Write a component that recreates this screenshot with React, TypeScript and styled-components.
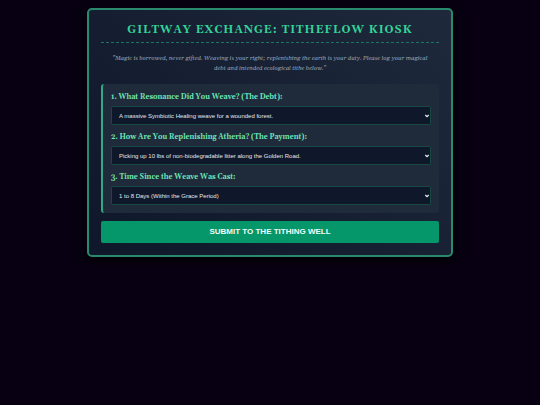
import React, { useId } from "react";
import styled, { createGlobalStyle } from "styled-components";

const serif = `Georgia, Gelasio, "Liberation Serif", serif`;
const sans = `"Liberation Sans", Arial, sans-serif`;

const GlobalStyle = createGlobalStyle`
  *, *::before, *::after { box-sizing: border-box; }
  html { background: #080012; }
  body { margin: 0; background: #080012; font-family: ${serif}; }
`;

const Page = styled.main`
  display: flex;
  justify-content: center;
  padding: 8px;
`;

const Card = styled.form`
  width: 100%;
  max-width: 366px;
  padding: 12px;
  border: 2px solid #298a6d;
  border-radius: 5px;
  background: linear-gradient(45deg, #0f172a, #1e293b);
  box-shadow: 0 5px 14px rgba(0, 0, 0, 0.8);
`;

const Title = styled.h1`
  margin: 0;
  padding-bottom: 3px;
  border-bottom: 1px dashed #1c7561;
  color: #34d399;
  font-size: 11px;
  line-height: 17px;
  font-weight: 700;
  letter-spacing: 1px;
  text-align: center;
  text-transform: uppercase;
`;

const Creed = styled.p`
  margin: 10px 0 11px;
  padding: 0 8px;
  color: #94a3b8;
  font-size: 6px;
  line-height: 10px;
  font-style: italic;
  text-align: center;
`;

const Panel = styled.div`
  display: grid;
  gap: 6px;
  padding: 7px 8px 8px;
  border-left: 2px solid #34a985;
  border-radius: 3px;
  background: #1f2a3b;
`;

const Label = styled.label`
  display: block;
  margin-bottom: 3px;
  color: #6ee7b7;
  font-size: 7px;
  line-height: 12px;
  font-weight: 700;
`;

const SelectFrame = styled.div`
  position: relative;
`;

const Select = styled.select`
  appearance: none;
  display: block;
  width: 100%;
  height: 19px;
  padding: 0 14px 0 7px;
  border: 1px solid #174844;
  border-radius: 2px;
  background: #0f172a;
  color: #e2e8f0;
  font-family: ${sans};
  font-size: 6px;
`;

const Arrow = styled.svg`
  position: absolute;
  top: 8px;
  right: 2px;
  width: 4px;
  height: 4px;
  pointer-events: none;
`;

const Submit = styled.button`
  display: block;
  width: 100%;
  margin-top: 8px;
  padding: 6px;
  border: 0;
  border-radius: 2px;
  background: #059669;
  color: #f0fdf9;
  font-family: ${sans};
  font-size: 8px;
  line-height: 10px;
  font-weight: 700;
  text-transform: uppercase;
`;

function Question({ label, answer }: { label: string; answer: string }) {
  const id = useId();
  return (
    <div>
      <Label htmlFor={id}>{label}</Label>
      <SelectFrame>
        <Select id={id}>
          <option>{answer}</option>
        </Select>
        <Arrow viewBox="0 0 4 4" aria-hidden="true">
          <path d="M0.3 1L2 2.7L3.7 1" fill="none" stroke="#f1f5f9" strokeWidth="1.2" />
        </Arrow>
      </SelectFrame>
    </div>
  );
}

const questions = [
  {
    label: "1. What Resonance Did You Weave? (The Debt):",
    answer: "A massive Symbiotic Healing weave for a wounded forest.",
  },
  {
    label: "2. How Are You Replenishing Atheria? (The Payment):",
    answer: "Picking up 10 lbs of non-biodegradable litter along the Golden Road.",
  },
  {
    label: "3. Time Since the Weave Was Cast:",
    answer: "1 to 8 Days (Within the Grace Period)",
  },
];

export default function App() {
  return (
    <>
      <GlobalStyle />
      <Page>
        <Card onSubmit={(event) => event.preventDefault()}>
          <Title>Giltway Exchange: Titheflow Kiosk</Title>
          <Creed>
            "Magic is borrowed, never gifted. Weaving is your right; replenishing the earth is your
            duty. Please log your magical debt and intended ecological tithe below."
          </Creed>
          <Panel>
            {questions.map((question) => (
              <Question key={question.label} {...question} />
            ))}
          </Panel>
          <Submit type="submit">Submit to the Tithing Well</Submit>
        </Card>
      </Page>
    </>
  );
}
